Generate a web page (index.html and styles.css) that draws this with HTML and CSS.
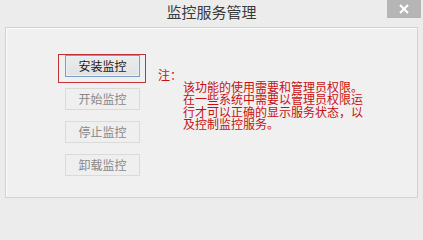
FILE: index.html
```html
<!DOCTYPE html>
<html lang="zh-CN">
<head>
<meta charset="utf-8">
<title>监控服务管理</title>
<link rel="stylesheet" href="styles.css">
</head>
<body>
<div class="window">
  <div class="titlebar">
    <div class="spacer"></div>
    <div class="title">监控服务管理</div>
    <button class="close" aria-label="关闭">
      <svg width="12" height="10" viewBox="0 0 12 10"><path d="M2 1 L10 9 M10 1 L2 9" stroke="#fff" stroke-width="2" fill="none"/></svg>
    </button>
  </div>
  <div class="panel">
    <div class="buttons">
      <button class="btn primary">安装监控</button>
      <button class="btn" disabled>开始监控</button>
      <button class="btn" disabled>停止监控</button>
      <button class="btn" disabled>卸载监控</button>
    </div>
    <div class="note">
      <div class="note-label">注：</div>
      <p class="note-text">该功能的使用需要和管理员权限。在一些系统中需要以管理员权限运行才可以正确的显示服务状态，以及控制监控服务。</p>
    </div>
  </div>
</div>
</body>
</html>
```
FILE: styles.css
```css
html, body {
  margin: 0;
  padding: 0;
}
body {
  background: #ececec;
  font-family: "Noto Sans CJK SC", "Noto Sans", sans-serif;
  width: 423px;
  height: 203px;
  overflow: hidden;
}
.window {
  display: flex;
  flex-direction: column;
  height: 203px;
}
.titlebar {
  display: grid;
  grid-template-columns: 1fr auto 1fr;
  height: 27px;
}
.title {
  font-size: 15px;
  line-height: 17px;
  padding-top: 3px;
  color: #3a3a3a;
}
.close {
  justify-self: end;
  align-self: start;
  margin-right: 2px;
  width: 34px;
  height: 18px;
  padding: 0;
  border: 0;
  background: #b5b5b5;
  display: flex;
  align-items: center;
  justify-content: center;
}
.close svg { display: block; }
.panel {
  margin-left: 5px;
  width: 411px;
  height: 169px;
  border: 1px solid #d2d2d2;
  box-shadow: inset 1px 1px 0 #fbfbfb;
  background: #f0f0f0;
  display: flex;
  padding: 27px 0 0 59px;
  box-sizing: content-box;
  width: 352px;
  height: 142px;
}
.buttons {
  display: flex;
  flex-direction: column;
  gap: 11px;
}
.btn {
  width: 75px;
  height: 22px;
  padding: 0;
  font-family: "Noto Sans CJK SC", sans-serif;
  font-size: 12px;
  line-height: 20px;
  color: #888;
  background: #efefef;
  border: 1px solid #dadada;
  box-sizing: border-box;
}
.btn.primary {
  position: relative;
  color: #1a1a1a;
  background: linear-gradient(#ececec, #e2e2e2);
  border: 1px solid #7b9ec6;
  box-shadow: inset 0 0 0 1px #e6f1fb;
}
.btn.primary::after {
  content: "";
  position: absolute;
  left: -8px;
  top: -2px;
  width: 88px;
  height: 29px;
  border: 1px solid #c53035;
  box-sizing: border-box;
}
.note {
  margin-left: 18px;
  margin-top: 14px;
  color: #c81010;
  font-size: 12px;
  line-height: 12px;
}
.note-label {
  height: 12px;
}
.note-text {
  margin: 0 0 0 25px;
  width: 182px;
  line-height: 12.4px;
}
```
